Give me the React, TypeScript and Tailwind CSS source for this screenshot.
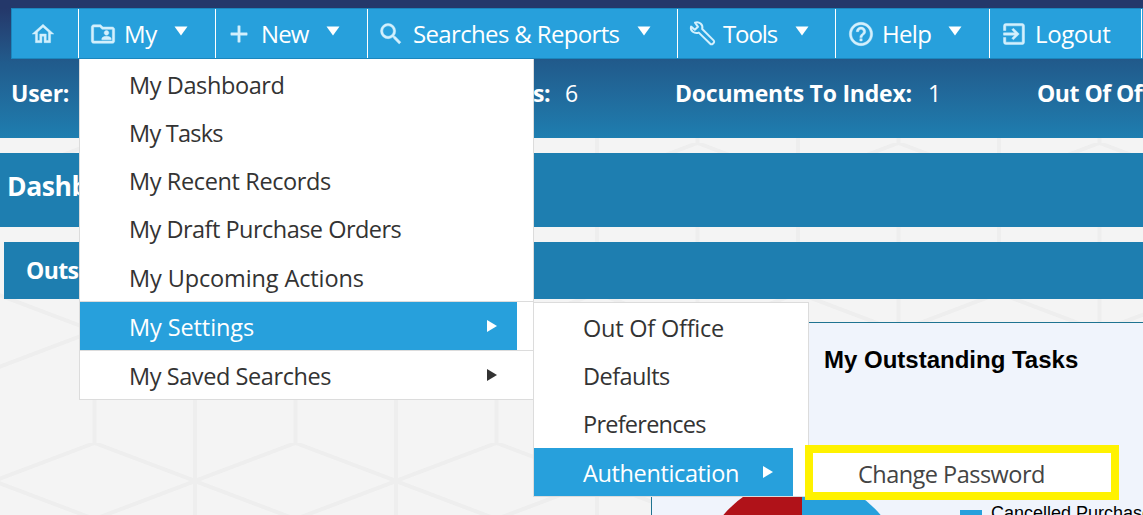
import {
  MdAdd,
  MdExitToApp,
  MdHelpOutline,
  MdOutlineFolderShared,
  MdOutlineHome,
  MdSearch,
} from "react-icons/md";

const iconClass = "shrink-0 stroke-[#d3f0fd] stroke-[0.4] text-[#d3f0fd] [&_[fill=none]]:stroke-none";

const DownArrow = () => (
  <svg width="14" height="10" viewBox="0 0 14 10" className="mb-[6px] shrink-0">
    <path d="M0.5 0.5h13L7 9.5z" fill="#fff" />
  </svg>
);

const RightArrow = () => (
  <svg width="10" height="12" viewBox="0 0 10 12" className="mb-[4px] shrink-0">
    <path d="M0 0l10 6L0 12z" fill="currentColor" />
  </svg>
);

const WrenchIcon = () => (
  <svg width="28" height="28" viewBox="0 0 28 28" className="shrink-0">
    <path
      d="M7 2.6C11 1.2 15.4 4.4 14.2 9L25.6 20.4a1.8 1.8 0 0 1 0 2.6l-0.8 0.8a1.8 1.8 0 0 1-2.6 0L10.8 12.6C6.4 14.2 1.8 10.8 3.1 6.6L6.8 9.8L10 6.8Z"
      fill="none"
      stroke="#d3f0fd"
      strokeWidth="2"
      strokeLinejoin="round"
    />
  </svg>
);

const CubePattern = () => (
  <svg width="1143" height="515" className="absolute inset-0">
    <defs>
      <pattern id="cubes" x="-6" y="143" width="201" height="300" patternUnits="userSpaceOnUse">
        <path
          d="M100.5 0L0 38M100.5 0L201 38M0 38L100.5 76L201 38M0 38V150M201 38V150M100.5 76V188M0 150L100.5 188L201 150M0 226L100.5 188L201 226M0 226V338M201 226V338M100.5 188V300M0 -74V38M201 -74V38"
          fill="none"
          stroke="#eeeeee"
          strokeWidth="4"
        />
      </pattern>
    </defs>
    <rect width="1143" height="515" fill="url(#cubes)" />
  </svg>
);

const TopNav = () => (
  <nav className="ml-[11px] flex h-[51px] w-[1140px] border border-[#1b86bd] bg-[#27a0dc] text-[24px] text-white">
    <div className="flex w-[67px] items-center border-r border-white pl-[18px]">
      <MdOutlineHome size={26} className={iconClass} />
    </div>
    <div className="flex w-[137px] items-center border-r border-white pl-[10px]">
      <MdOutlineFolderShared size={28} className={iconClass} />
      <span className="ml-[7px] w-[50px] tracking-[-0.3px]">My</span>
      <DownArrow />
    </div>
    <div className="flex w-[152px] items-center border-r border-white pl-[9px]">
      <MdAdd size={28} className={iconClass} />
      <span className="ml-[8px] w-[65px] tracking-[-0.9px]">New</span>
      <DownArrow />
    </div>
    <div className="flex w-[310px] items-center border-r border-white pl-[9px]">
      <MdSearch size={28} className={iconClass} />
      <span className="ml-[8px] w-[224px] whitespace-nowrap tracking-[-0.65px]">Searches &amp; Reports</span>
      <DownArrow />
    </div>
    <div className="flex w-[158px] items-center border-r border-white pl-[10px]">
      <WrenchIcon />
      <span className="ml-[7px] w-[72px] tracking-[-1.1px]">Tools</span>
      <DownArrow />
    </div>
    <div className="flex w-[154px] items-center border-r border-white pl-[11px]">
      <MdHelpOutline size={28} className={iconClass} />
      <span className="ml-[7px] w-[66px] tracking-[-0.7px]">Help</span>
      <DownArrow />
    </div>
    <div className="flex w-[152px] items-center border-r border-white pl-[10px]">
      <MdExitToApp size={28} className={iconClass} />
      <span className="ml-[7px] tracking-[-0.4px]">Logout</span>
    </div>
  </nav>
);

const StatusBar = () => (
  <div className="flex h-[69px] items-center overflow-hidden whitespace-nowrap pb-[1px] text-[23px] text-white">
    <div className="w-[322px] shrink-0 pl-[11px] font-bold tracking-[-0.25px]">User:</div>
    <div className="flex w-[353px] shrink-0">
      <span className="w-[228px] text-right font-bold tracking-[-0.5px]">Outstanding Tasks:</span>
      <span className="ml-[15px]">6</span>
    </div>
    <div className="flex w-[361px] shrink-0">
      <span className="w-[253px] font-bold tracking-[-0.23px]">Documents To Index:</span>
      <span>1</span>
    </div>
    <div className="shrink-0 pl-[1px] font-bold tracking-[-0.5px]">Out Of Office:</div>
  </div>
);

const MyMenu = () => (
  <div className="absolute left-[79px] top-[59px] h-[341px] w-[455px] border border-t-0 border-[#dcdcdc] bg-white text-[23.5px] text-[#333]">
    <div className="flex h-[242px] flex-col pt-[3px]">
      <div className="flex h-[48px] items-center pl-[49px] tracking-[-0.4px]">My Dashboard</div>
      <div className="flex h-[48px] items-center pl-[49px] pt-[1px] tracking-[-0.75px]">My Tasks</div>
      <div className="flex h-[48px] items-center pl-[49px] pt-[2px] tracking-[-0.38px]">My Recent Records</div>
      <div className="flex h-[48px] items-center pl-[49px] pt-[2px] tracking-[-0.52px]">My Draft Purchase Orders</div>
      <div className="flex h-[49px] items-center pl-[49px] pt-[4px] tracking-[-0.12px]">My Upcoming Actions</div>
    </div>
    <div className="h-[50px] border-y border-[#dcdcdc]">
      <div className="flex h-full w-[437px] items-center justify-between bg-[#27a0dc] pl-[49px] pr-[20px] pt-[4px] tracking-[-0.1px] text-white">
        My Settings
        <RightArrow />
      </div>
    </div>
    <div className="flex h-[48px] w-[437px] items-center justify-between pl-[49px] pr-[20px] pt-[4px] tracking-[-0.42px]">
      My Saved Searches
      <RightArrow />
    </div>
  </div>
);

const SettingsMenu = () => (
  <div className="absolute left-[533px] top-[302px] w-[276px] border border-[#dcdcdc] bg-white text-[23.5px] text-[#333]">
    <div className="flex h-[49px] items-center pl-[49px] pt-[2px] tracking-[-0.22px]">Out Of Office</div>
    <div className="flex h-[48px] items-center pl-[49px] pt-[2px] tracking-[-0.55px]">Defaults</div>
    <div className="flex h-[48px] items-center pl-[49px] pt-[2px] tracking-[-0.75px]">Preferences</div>
    <div className="flex h-[48px] w-[259px] items-center justify-between bg-[#27a0dc] pl-[49px] pr-[20px] pt-[4px] tracking-[-0.37px] text-white">
      Authentication
      <RightArrow />
    </div>
  </div>
);

const TasksChart = () => (
  <div className="ml-[651px] h-[193px] overflow-hidden border-l border-t border-[#1f7391] bg-[#f0f4fc] font-['Liberation_Sans',Arial,sans-serif] text-black">
    <div className="mt-[22px] pl-[172px] text-[24px] font-bold leading-[30px]">My Outstanding Tasks</div>
    <div className="mt-[103px] flex">
      <svg width="308" height="40" viewBox="652 478 308 40" className="shrink-0">
        <path d="M802 478V580H700A102 102 0 0 1 802 478z" fill="#b01219" />
        <path d="M802 478V580H904A102 102 0 0 0 802 478z" fill="#27a0dc" />
      </svg>
      <div className="mt-[32px] h-[12px] w-[22px] shrink-0 bg-[#27a0dc]" />
      <div className="ml-[9px] mt-[25px] whitespace-nowrap text-[18px] leading-[20px]">Cancelled Purchase Orders</div>
    </div>
  </div>
);

export default function App() {
  return (
    <div className="relative h-[515px] w-[1143px] overflow-hidden bg-[#f4f4f4] font-['Open_Sans','Segoe_UI',sans-serif]">
      <CubePattern />
      <div className="relative">
        <header className="h-[138px] bg-linear-to-b from-[#24386a] from-6% via-[#215b8c] via-45% to-[#1e7eb0] pt-[8px]">
          <TopNav />
          <StatusBar />
        </header>
        <div className="mt-[15px] flex h-[74px] items-center bg-[#1e7eb0] pb-[7px] pl-[7px] text-[26.5px] font-bold tracking-[-0.4px] text-white">
          Dashboard
        </div>
        <div className="ml-[4px] mt-[15px] flex h-[57px] items-center bg-[#1e7eb0] pb-[1px] pl-[22px] text-[23px] font-bold tracking-[-0.6px] text-white">
          Outstanding
        </div>
        <div className="mt-[23px]">
          <TasksChart />
        </div>
      </div>
      <MyMenu />
      <SettingsMenu />
      <div className="absolute left-[805px] top-[445px] flex h-[55px] w-[314px] items-center border-[8px] border-[#fff200] bg-white pb-[1px] pl-[45px] pt-[5px] text-[23.5px] tracking-[-0.52px] text-[#444]">
        Change Password
      </div>
    </div>
  );
}
